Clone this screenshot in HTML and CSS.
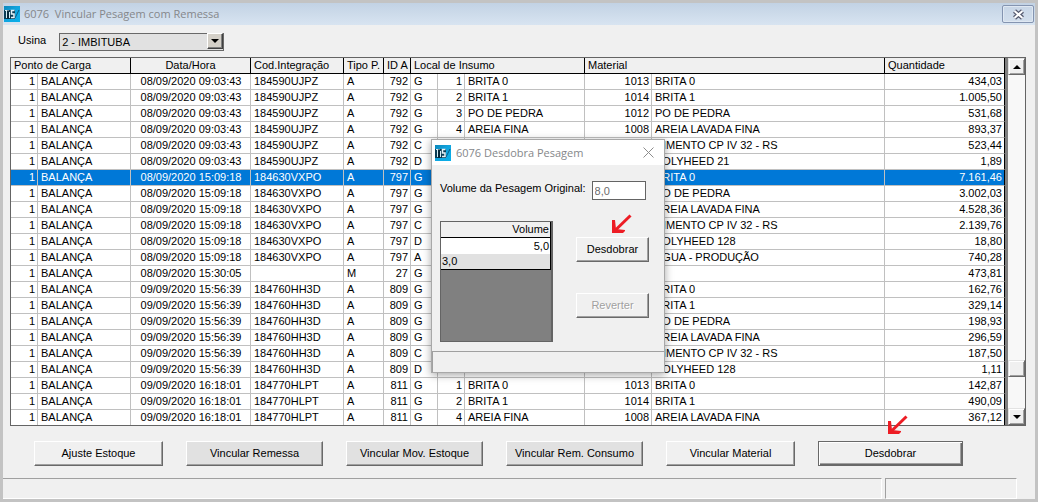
FILE: index.html
```html
<!DOCTYPE html>
<html lang="pt-BR">
<head>
<meta charset="utf-8">
<title>6076 Vincular Pesagem com Remessa</title>
<link rel="stylesheet" href="styles.css">
</head>
<body>
<svg class="defs" aria-hidden="true">
  <defs>
    <linearGradient id="blue" x1="0" y1="0" x2="1" y2="1">
      <stop offset="0" stop-color="#0b86ba"/><stop offset=".45" stop-color="#12a4de"/><stop offset="1" stop-color="#08b0ea"/>
    </linearGradient>
    <symbol id="logo" viewBox="0 0 16 16">
      <rect width="16" height="16" fill="url(#blue)"/>
      <path d="M0 4H11V13H0Z" fill="#0a3c54"/>
      <path d="M11 12L15 4" stroke="#0a5c86" stroke-width="1"/>
      <path d="M1 4.500H5M2.500 4V12M5.500 6V12" stroke="#d6eef6" stroke-width="1" fill="none"/>
      <path d="M10.500 4.500H7.500V8H10V11.500H7" stroke="#e6f4fa" stroke-width="1.500" fill="none"/>
      <path d="M4 4V13" stroke="#04141e" stroke-width="1"/>
    </symbol>
    <symbol id="arrow" viewBox="0 0 20 20">
      <path d="M18.500 1.500L3 16.500" stroke="#ed1c24" stroke-width="3" fill="none"/>
      <path d="M0 6H3L4 15L13 16V17L11 19H0Z" fill="#ed1c24"/>
    </symbol>
  </defs>
</svg>
<main class="window">
  <header class="titlebar">
    <svg class="logo" aria-hidden="true"><use href="#logo"/></svg>
    <h1 class="title">6076&nbsp; Vincular Pesagem com Remessa</h1>
    <button class="close" type="button" aria-label="Fechar">
      <svg width="13" height="11" viewBox="0 0 13 11" aria-hidden="true"><path d="M2.500 2L10.500 9M10.500 2L2.500 9" stroke="#565b70" stroke-width="4.500"/><path d="M2.500 2L10.500 9M10.500 2L2.500 9" stroke="#fff" stroke-width="2"/></svg>
    </button>
  </header>

  <div class="filter">
    <label for="usina">Usina</label>
    <div class="combo">
      <select id="usina"><option>2 - IMBITUBA</option></select>
      <span class="combo-arrow"><i class="tri down"></i></span>
    </div>
  </div>

  <div class="grid">
    <table class="records">
      <colgroup><col class="c27"><col class="c93"><col class="c120"><col class="c93"><col class="c40"><col class="c27"><col class="c27"><col class="c27"><col class="c120"><col class="c67"><col><col class="c120"></colgroup>
      <thead>
        <tr><th colspan="2">Ponto de Carga</th><th class="mid">Data/Hora</th><th>Cod.Integração</th><th>Tipo P.</th><th>ID A</th><th colspan="3">Local de Insumo</th><th colspan="2">Material</th><th>Quantidade</th></tr>
      </thead>
      <tbody>
        <tr><td>1</td><td>BALANÇA</td><td>08/09/2020 09:03:43</td><td>184590UJPZ</td><td>A</td><td>792</td><td>G</td><td>1</td><td>BRITA 0</td><td>1013</td><td>BRITA 0</td><td>434,03</td></tr>
        <tr><td>1</td><td>BALANÇA</td><td>08/09/2020 09:03:43</td><td>184590UJPZ</td><td>A</td><td>792</td><td>G</td><td>2</td><td>BRITA 1</td><td>1014</td><td>BRITA 1</td><td>1.005,50</td></tr>
        <tr><td>1</td><td>BALANÇA</td><td>08/09/2020 09:03:43</td><td>184590UJPZ</td><td>A</td><td>792</td><td>G</td><td>3</td><td>PO DE PEDRA</td><td>1012</td><td>PO DE PEDRA</td><td>531,68</td></tr>
        <tr><td>1</td><td>BALANÇA</td><td>08/09/2020 09:03:43</td><td>184590UJPZ</td><td>A</td><td>792</td><td>G</td><td>4</td><td>AREIA FINA</td><td>1008</td><td>AREIA LAVADA FINA</td><td>893,37</td></tr>
        <tr><td>1</td><td>BALANÇA</td><td>08/09/2020 09:03:43</td><td>184590UJPZ</td><td>A</td><td>792</td><td>C</td><td></td><td></td><td></td><td>CIMENTO CP IV 32 - RS</td><td>523,44</td></tr>
        <tr><td>1</td><td>BALANÇA</td><td>08/09/2020 09:03:43</td><td>184590UJPZ</td><td>A</td><td>792</td><td>D</td><td></td><td></td><td></td><td>POLYHEED 21</td><td>1,89</td></tr>
        <tr class="selected"><td>1</td><td>BALANÇA</td><td>08/09/2020 15:09:18</td><td>184630VXPO</td><td>A</td><td>797</td><td>G</td><td></td><td></td><td></td><td>BRITA 0</td><td>7.161,46</td></tr>
        <tr><td>1</td><td>BALANÇA</td><td>08/09/2020 15:09:18</td><td>184630VXPO</td><td>A</td><td>797</td><td>G</td><td></td><td></td><td></td><td>PO DE PEDRA</td><td>3.002,03</td></tr>
        <tr><td>1</td><td>BALANÇA</td><td>08/09/2020 15:09:18</td><td>184630VXPO</td><td>A</td><td>797</td><td>G</td><td></td><td></td><td></td><td>AREIA LAVADA FINA</td><td>4.528,36</td></tr>
        <tr><td>1</td><td>BALANÇA</td><td>08/09/2020 15:09:18</td><td>184630VXPO</td><td>A</td><td>797</td><td>C</td><td></td><td></td><td></td><td>CIMENTO CP IV 32 - RS</td><td>2.139,76</td></tr>
        <tr><td>1</td><td>BALANÇA</td><td>08/09/2020 15:09:18</td><td>184630VXPO</td><td>A</td><td>797</td><td>D</td><td></td><td></td><td></td><td>POLYHEED 128</td><td>18,80</td></tr>
        <tr><td>1</td><td>BALANÇA</td><td>08/09/2020 15:09:18</td><td>184630VXPO</td><td>A</td><td>797</td><td>A</td><td></td><td></td><td></td><td>AGUA - PRODUÇÃO</td><td>740,28</td></tr>
        <tr><td>1</td><td>BALANÇA</td><td>08/09/2020 15:30:05</td><td></td><td>M</td><td>27</td><td>G</td><td></td><td></td><td></td><td></td><td>473,81</td></tr>
        <tr><td>1</td><td>BALANÇA</td><td>09/09/2020 15:56:39</td><td>184760HH3D</td><td>A</td><td>809</td><td>G</td><td></td><td></td><td></td><td>BRITA 0</td><td>162,76</td></tr>
        <tr><td>1</td><td>BALANÇA</td><td>09/09/2020 15:56:39</td><td>184760HH3D</td><td>A</td><td>809</td><td>G</td><td></td><td></td><td></td><td>BRITA 1</td><td>329,14</td></tr>
        <tr><td>1</td><td>BALANÇA</td><td>09/09/2020 15:56:39</td><td>184760HH3D</td><td>A</td><td>809</td><td>G</td><td></td><td></td><td></td><td>PO DE PEDRA</td><td>198,93</td></tr>
        <tr><td>1</td><td>BALANÇA</td><td>09/09/2020 15:56:39</td><td>184760HH3D</td><td>A</td><td>809</td><td>G</td><td></td><td></td><td></td><td>AREIA LAVADA FINA</td><td>296,59</td></tr>
        <tr><td>1</td><td>BALANÇA</td><td>09/09/2020 15:56:39</td><td>184760HH3D</td><td>A</td><td>809</td><td>C</td><td></td><td></td><td></td><td>CIMENTO CP IV 32 - RS</td><td>187,50</td></tr>
        <tr><td>1</td><td>BALANÇA</td><td>09/09/2020 15:56:39</td><td>184760HH3D</td><td>A</td><td>809</td><td>D</td><td>21</td><td>ADITIVO</td><td>1016</td><td>POLYHEED 128</td><td>1,11</td></tr>
        <tr><td>1</td><td>BALANÇA</td><td>09/09/2020 16:18:01</td><td>184770HLPT</td><td>A</td><td>811</td><td>G</td><td>1</td><td>BRITA 0</td><td>1013</td><td>BRITA 0</td><td>142,87</td></tr>
        <tr><td>1</td><td>BALANÇA</td><td>09/09/2020 16:18:01</td><td>184770HLPT</td><td>A</td><td>811</td><td>G</td><td>2</td><td>BRITA 1</td><td>1014</td><td>BRITA 1</td><td>490,09</td></tr>
        <tr><td>1</td><td>BALANÇA</td><td>09/09/2020 16:18:01</td><td>184770HLPT</td><td>A</td><td>811</td><td>G</td><td>4</td><td>AREIA FINA</td><td>1008</td><td>AREIA LAVADA FINA</td><td>367,12</td></tr>
      </tbody>
    </table>
    <div class="scrollbar">
      <button class="scroll-btn" type="button" aria-label="Rolar para cima"><i class="tri up"></i></button>
      <div class="track"><div class="thumb"></div></div>
      <button class="scroll-btn" type="button" aria-label="Rolar para baixo"><i class="tri down"></i></button>
    </div>
  </div>

  <div class="actions">
    <button class="btn" type="button">Ajuste Estoque</button>
    <button class="btn wide shaded" type="button">Vincular Remessa</button>
    <button class="btn wide shaded" type="button">Vincular Mov. Estoque</button>
    <button class="btn wide shaded" type="button">Vincular Rem. Consumo</button>
    <button class="btn" type="button">Vincular Material</button>
    <div class="pointed">
      <button class="btn default" type="button">Desdobrar</button>
      <svg class="arrow" aria-hidden="true"><use href="#arrow"/></svg>
    </div>
  </div>

  <footer class="status"><div class="pane grow"></div><div class="pane side"></div></footer>

  <section class="dialog" role="dialog" aria-labelledby="dialog-title">
    <header class="dialog-bar">
      <svg class="logo" aria-hidden="true"><use href="#logo"/></svg>
      <h2 class="title" id="dialog-title">6076 Desdobra Pesagem</h2>
      <button class="dialog-close" type="button" aria-label="Fechar">
        <svg width="11" height="11" viewBox="0 0 11 11" aria-hidden="true"><path d="M.5 .5L10.500 10.500M10.500 .5L.5 10.500" stroke="#8c8c8c"/></svg>
      </button>
    </header>
    <div class="dialog-field">
      <label for="volume">Volume da Pesagem Original:</label>
      <input id="volume" type="text" value="8,0" disabled>
    </div>
    <div class="dialog-body">
      <div class="volumes">
        <table>
          <thead><tr><th>Volume</th></tr></thead>
          <tbody><tr><td>5,0</td></tr><tr class="editing"><td>3,0</td></tr></tbody>
        </table>
      </div>
      <div class="dialog-actions">
        <div class="pointed">
          <button class="btn" type="button">Desdobrar</button>
          <svg class="arrow" aria-hidden="true"><use href="#arrow"/></svg>
        </div>
        <button class="btn" type="button" disabled>Reverter</button>
      </div>
    </div>
    <footer class="dialog-status"></footer>
  </section>
</main>
</body>
</html>
```
FILE: styles.css
```css
* { box-sizing: border-box; }
body {
  margin: 0;
  padding: 3px;
  background: #c3c3c3;
  color: #000;
  font: 11px/15px "Liberation Sans", Arial, sans-serif;
}
button, input, select { font: inherit; color: inherit; margin: 0; border-radius: 0; }
.defs { position: absolute; width: 0; height: 0; }

.window { position: relative; background: #f0f0f0; min-width: 1000px; }
.titlebar {
  display: flex;
  align-items: center;
  gap: 4px;
  height: 22px;
  padding: 0 1px;
  background: linear-gradient(#c2d2e4, #d8e4f1);
}
.logo { width: 16px; height: 16px; flex: none; }
.title {
  flex: 1;
  margin: 0;
  font: 11px/16px "Open Sans", "Noto Sans", sans-serif;
  color: #85878a;
}
.close {
  display: flex;
  align-items: center;
  justify-content: center;
  width: 32px;
  height: 18px;
  padding: 0;
  border: 1px solid #8494b0;
  border-radius: 2px;
  background: linear-gradient(#c8d6e7, #d2deec);
  box-shadow: inset 0 0 0 1px #dfe8f2;
}

.filter { display: flex; gap: 13px; height: 32px; padding: 8px 15px 0; }
.combo { position: relative; width: 165px; height: 18px; }
.combo select {
  display: block;
  width: 100%;
  height: 100%;
  padding: 0 20px 0 2px;
  border: 1px solid #696969;
  background: #e1e1e1;
  appearance: none;
}
.combo-arrow {
  position: absolute;
  top: 0;
  right: 1px;
  display: flex;
  align-items: center;
  justify-content: center;
  width: 16px;
  height: 16px;
  background: #d4d0c8;
  border: 1px solid;
  border-color: #fff #404040 #404040 #fff;
  box-shadow: inset -1px -1px #808080;
  pointer-events: none;
}
.tri { border: 4px solid transparent; }
.tri.down { border-top-color: #000; border-bottom: 0; }
.tri.up { border-bottom-color: #000; border-top: 0; }

.grid {
  display: flex;
  margin: 0 9px 0 7px;
  border: 1px solid #646464;
  background: #fff;
}
.records {
  flex: 1;
  width: 0;
  table-layout: fixed;
  border-collapse: separate;
  border-spacing: 0;
  white-space: nowrap;
}
.c27 { width: 27px; }
.c40 { width: 40px; }
.c67 { width: 67px; }
.c93 { width: 93px; }
.c120 { width: 120px; }
th { font-weight: normal; text-align: left; }
.records th {
  height: 16px;
  padding: 0 3px;
  overflow: hidden;
  background: #f0f0f0;
  border: solid #000;
  border-width: 0 1px 1px 0;
}
.records .mid { text-align: center; }
.records td {
  height: 16px;
  padding: 0 2px 0 3px;
  border: solid #c0c0c0;
  border-width: 0 1px 1px 0;
}
.records td:nth-child(3) { text-align: center; }
.records td:nth-child(1),
.records td:nth-child(6),
.records td:nth-child(8),
.records td:nth-child(10),
.records td:nth-child(12) { text-align: right; }
.records td:last-child { border-right-color: #000; }
.records tr:last-child td { border-bottom: 0; height: 15px; }
.records .selected td { background: #0078d7; color: #fff; }

.scrollbar {
  display: flex;
  flex-direction: column;
  width: 20px;
  border-left: 3px solid #808080;
}
.scroll-btn, .thumb {
  display: flex;
  align-items: center;
  justify-content: center;
  width: 17px;
  height: 17px;
  padding: 0;
  background: #f0f0f0;
  border: 1px solid;
  border-color: #e3e3e3 #696969 #696969 #e3e3e3;
  box-shadow: inset 1px 1px #fff, inset -1px -1px #a0a0a0;
}
.track {
  flex: 1;
  display: flex;
  flex-direction: column;
  justify-content: flex-end;
  padding-bottom: 31px;
  background: #f8f8f8;
}

.actions { display: flex; gap: 23px; padding: 15px 31px 12px; }
.btn {
  width: 130px;
  height: 25px;
  padding: 0;
  background: #f0f0f0;
  border: 1px solid;
  border-color: #fff #696969 #696969 #fff;
  box-shadow: inset -1px -1px #a0a0a0;
}
.actions .btn { flex: none; width: 129px; }
.actions .btn.wide { width: 137px; }
.actions .btn.default { width: 145px; border-color: #696969; box-shadow: inset 1px 1px #fff, inset -1px -1px #696969, inset -2px -2px #a0a0a0; }
.btn.shaded { background: #e1e1e1; }
.btn:disabled { color: #a0a0a0; text-shadow: 1px 1px #fff; }
.pointed { position: relative; }
.arrow { position: absolute; left: 50%; bottom: 100%; width: 20px; height: 20px; }
.actions .arrow { margin: 0 0 6px -3px; }

.status { display: flex; gap: 3px; height: 21px; padding-right: 18px; }
.pane { border: solid; border-width: 1px 1px 1px 0; border-color: #a0a0a0 #fff #fff #a0a0a0; }
.grow { flex: 1; }
.side { width: 132px; border-left-width: 1px; }

.dialog {
  position: absolute;
  left: 429px;
  top: 137px;
  width: 232px;
  background: #f0f0f0;
  box-shadow: 0 0 0 1px #a8a8a8, 0 2px 8px 1px rgba(0, 0, 0, .35);
}
.dialog-bar {
  display: flex;
  align-items: center;
  gap: 5px;
  height: 25px;
  padding: 0 10px 0 3px;
  background: #fff;
}
.dialog-close { display: flex; padding: 0; border: 0; background: none; }
.dialog-field { display: flex; gap: 6px; padding: 16px 19px 0 8px; }
.dialog-field label { flex: 1; white-space: nowrap; }
.dialog-field input {
  width: 54px;
  height: 19px;
  padding: 0 2px;
  border: 1px solid #646464;
  background: #fff;
  color: #6d6d6d;
}
.dialog-body { display: flex; gap: 23px; padding: 21px 15px 9px 8px; }
.volumes {
  flex: 1;
  height: 121px;
  background: #808080;
  border: solid #646464;
  border-width: 1px 2px 1px 1px;
}
.volumes table { width: 100%; border-collapse: separate; border-spacing: 0; }
.volumes th, .volumes td {
  height: 16px;
  padding: 0 1px;
  background: #fff;
  border-right: 1px solid #000;
  text-align: right;
}
.volumes th { background: #f0f0f0; border-bottom: 1px solid #000; }
.volumes .editing td { background: #e1e1e1; border-bottom: 1px solid #000; text-align: left; }
.dialog-actions { display: flex; flex-direction: column; gap: 31px; padding-top: 16px; }
.dialog-actions .btn { display: block; width: 73px; }
.dialog-actions .arrow { margin: 0 0 3px -1px; }
.dialog-status { height: 21px; border: solid; border-width: 1px 0 0 1px; border-color: #a0a0a0; }
```
